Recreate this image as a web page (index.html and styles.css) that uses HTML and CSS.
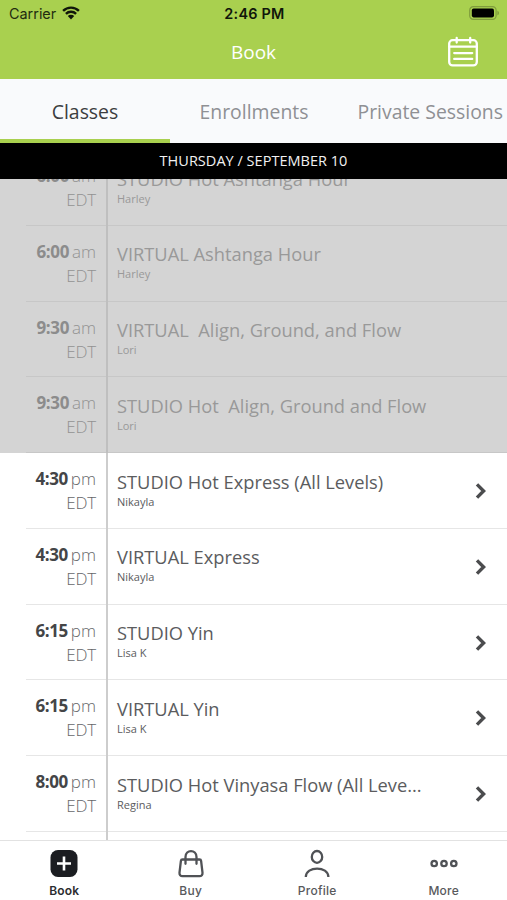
FILE: index.html
```html
<!DOCTYPE html>
<html lang="en">
<head>
<meta charset="utf-8">
<title>Book</title>
<link rel="stylesheet" href="styles.css">
</head>
<body>
<div class="app">
  <header class="header">
    <div class="status">
      <div class="carrier"><span>Carrier</span>
        <svg width="18" height="14" viewBox="0 0 18 14"><path d="M1.1 4.9a11.2 11.2 0 0 1 15.8 0M3.9 7.9a7.2 7.2 0 0 1 10.2 0" fill="none" stroke="#10160a" stroke-width="2.4"/><path d="M5.8 10.1a4.5 4.5 0 0 1 6.4 0L9 13.4z" fill="#10160a"/></svg>
      </div>
      <div class="clock">2:46 PM</div>
      <div class="battery">
        <svg width="31" height="14" viewBox="0 0 31 14"><rect x=".7" y=".7" width="26.4" height="12.6" rx="3.6" fill="none" stroke="#7f9c3c" stroke-width="1.2"/><rect x="2.8" y="2.6" width="22.2" height="8.8" rx="1.8" fill="#000"/><path d="M28.4 4.7c2.1.7 2.1 3.9 0 4.6z" fill="#7f9c3c"/></svg>
      </div>
    </div>
    <div class="titlebar">
      <h1>Book</h1>
      <svg class="calendar" width="32" height="32" viewBox="0 0 32 32" fill="none" stroke="#fff" stroke-width="2.3" stroke-linecap="round"><rect x="2.2" y="4.200" width="27.600" height="25.200" rx="3.400"/><path d="M2.200 10.700h27.600M9.700 2v4.500M23.200 2v4.500M7.200 17.100h18M7.200 22.900h18"/></svg>
    </div>
  </header>
  <nav class="tabs">
    <div class="tab active"><span>Classes</span></div>
    <div class="tab"><span>Enrollments</span></div>
    <div class="tab wide"><span>Private Sessions</span></div>
  </nav>
  <div class="date"><span>THURSDAY / SEPTEMBER 10</span></div>
  <main class="list">
    <div class="rows">
      <div class="row past"><div class="time"><b>6:00</b><i>am</i><em>EDT</em></div><div class="info"><h2>STUDIO Hot Ashtanga Hour</h2><p>Harley</p></div></div>
      <div class="row past"><div class="time"><b>6:00</b><i>am</i><em>EDT</em></div><div class="info"><h2>VIRTUAL Ashtanga Hour</h2><p>Harley</p></div></div>
      <div class="row past"><div class="time"><b>9:30</b><i>am</i><em>EDT</em></div><div class="info"><h2>VIRTUAL&nbsp; Align, Ground, and Flow</h2><p>Lori</p></div></div>
      <div class="row past"><div class="time"><b>9:30</b><i>am</i><em>EDT</em></div><div class="info"><h2>STUDIO Hot&nbsp; Align, Ground and Flow</h2><p>Lori</p></div></div>
      <div class="row"><div class="time"><b>4:30</b><i>pm</i><em>EDT</em></div><div class="info"><h2>STUDIO Hot Express (All Levels)</h2><p>Nikayla</p></div><svg class="chev" width="12" height="18" viewBox="0 0 12 18"><path d="M2 2.4 8.6 9 2 15.6"/></svg></div>
      <div class="row"><div class="time"><b>4:30</b><i>pm</i><em>EDT</em></div><div class="info"><h2>VIRTUAL Express</h2><p>Nikayla</p></div><svg class="chev" width="12" height="18" viewBox="0 0 12 18"><path d="M2 2.4 8.6 9 2 15.6"/></svg></div>
      <div class="row"><div class="time"><b>6:15</b><i>pm</i><em>EDT</em></div><div class="info"><h2>STUDIO Yin</h2><p>Lisa K</p></div><svg class="chev" width="12" height="18" viewBox="0 0 12 18"><path d="M2 2.4 8.6 9 2 15.6"/></svg></div>
      <div class="row"><div class="time"><b>6:15</b><i>pm</i><em>EDT</em></div><div class="info"><h2>VIRTUAL Yin</h2><p>Lisa K</p></div><svg class="chev" width="12" height="18" viewBox="0 0 12 18"><path d="M2 2.4 8.6 9 2 15.6"/></svg></div>
      <div class="row"><div class="time"><b>8:00</b><i>pm</i><em>EDT</em></div><div class="info"><h2>STUDIO Hot Vinyasa Flow (All Leve...</h2><p>Regina</p></div><svg class="chev" width="12" height="18" viewBox="0 0 12 18"><path d="M2 2.4 8.6 9 2 15.6"/></svg></div>
      <div class="row"><div class="time"></div><div class="info"></div></div>
    </div>
  </main>
  <footer class="bottom">
    <div class="item on"><svg width="30" height="30" viewBox="0 0 30 30"><rect x="1.500" y="1" width="27" height="27" rx="7.500" fill="#1b1d21"/><path d="M15 7.500v14M8 14.500h14" stroke="#fff" stroke-width="2.600"/></svg><span>Book</span></div>
    <div class="item"><svg width="30" height="30" viewBox="0 0 30 30" fill="none" stroke="#505256" stroke-width="2.300" stroke-linecap="round" stroke-linejoin="round"><path d="M6.500 10.500h17c.9 0 1.500.5 1.600 1.400l1.400 11.700c.2 2.100-1 3.500-3 3.500h-17c-2 0-3.200-1.400-3-3.500l1.400-11.700c.1-.9.700-1.400 1.600-1.400z"/><path d="M9.500 14.800V8c0-7.800 11-7.800 11 0v6.800"/></svg><span>Buy</span></div>
    <div class="item"><svg width="30" height="30" viewBox="0 0 30 30" fill="none" stroke="#505256" stroke-width="2.300"><ellipse cx="15" cy="7.900" rx="5.200" ry="5.900"/><path d="M3.800 28c0-11.300 22.600-11.300 22.600 0"/></svg><span>Profile</span></div>
    <div class="item"><svg width="30" height="30" viewBox="0 0 30 30" fill="none" stroke="#505256" stroke-width="2.300"><circle cx="5.200" cy="14.500" r="2.700"/><circle cx="15" cy="14.500" r="2.700"/><circle cx="24.800" cy="14.500" r="2.700"/></svg><span>More</span></div>
  </footer>
</div>
</body>
</html>
```
FILE: styles.css
```css
* { box-sizing: border-box; margin: 0; padding: 0; }
body { font-family: "Open Sans", sans-serif; background: #fff; }
svg { display: block; flex: none; }
.app { width: 507px; height: 900px; display: flex; flex-direction: column; overflow: hidden; }
.header { height: 79px; flex: none; background: #a9d04f; }
.status { height: 26px; display: grid; grid-template-columns: 1fr auto 1fr; align-items: center; padding: 0 7px 0 9px; font-family: Inter, sans-serif; font-size: 14.4px; color: #10160a; }
.carrier { display: flex; gap: 6px; align-items: center; color: #222d10; }
.clock { font-weight: 600; letter-spacing: .25px; }
.battery { justify-self: end; }
.titlebar { height: 52px; display: grid; grid-template-columns: 1fr auto 1fr; align-items: center; padding-right: 28px; color: #fff; }
.titlebar h1 { grid-column: 2; font-size: 19px; font-weight: 400; line-height: 26px; margin-left: 28px; }
.calendar { justify-self: end; }
.tabs { height: 64px; flex: none; display: flex; background: #f9fafc; color: #8f9094; font-size: 19.4px; }
.tab { width: 168px; flex: none; display: flex; justify-content: center; align-items: center; white-space: nowrap; border-bottom: 4px solid transparent; padding-top: 5px; }
.tab.active { color: #3c3d40; border-bottom-color: #a9d04f; width: 170px; }
.tab.wide { justify-content: flex-start; padding-left: 19.500px; }
.date { height: 36px; flex: none; background: #000; color: #f2f2f2; display: flex; justify-content: center; align-items: center; font-size: 14.500px; letter-spacing: .02px; padding-bottom: 1px; }
.list { flex: 1; min-height: 0; overflow: hidden; }
.rows { margin-top: -29px; }
.row { height: 75.750px; display: flex; background: linear-gradient(#e6e6e6, #e6e6e6) 26px 100% / 100% 1px no-repeat #fff; color: #5b5c5e; }
.row.past { background: linear-gradient(#c7c7c7, #c7c7c7) 26px 100% / 100% 1px no-repeat #d4d4d4; color: #999; }
.time { width: 108px; flex: none; border-right: 2px solid #cdcdcd; padding: 14px 10px 0 0; text-align: right; font-size: 17px; line-height: 24px; white-space: nowrap; }
.past .time { border-right-color: #bfbfbf; }
.time b { font-weight: 700; letter-spacing: -.4px; color: #444547; }
.past .time b { color: #8c8c8c; }
.time i { font-style: normal; font-weight: 300; margin-left: 3px; color: #66676a; }
.time em { display: block; font-style: normal; font-weight: 300; letter-spacing: -.2px; color: #66676a; }
.past .time i, .past .time em { color: #929292; }
.info { padding: 15.500px 0 0 9px; flex: 1; }
.info h2 { font-size: 18.300px; line-height: 26px; font-weight: 400; white-space: nowrap; }
.info p { font-size: 11px; line-height: 14px; }
.chev { margin: 29px 20px 0 0; fill: none; stroke: #4b4c4e; stroke-width: 3.400; }
.bottom { height: 60px; flex: none; border-top: 1px solid #e2e2e2; display: flex; padding: 8px 0 0 1px; background: #fff; }
.item { width: 126.500px; display: flex; flex-direction: column; align-items: center; font-family: Inter, sans-serif; font-size: 12px; font-weight: 500; letter-spacing: .25px; color: #58595c; gap: 4px; line-height: 16px; }
.item.on { color: #2b2c2f; font-weight: 600; letter-spacing: .1px; }
```
